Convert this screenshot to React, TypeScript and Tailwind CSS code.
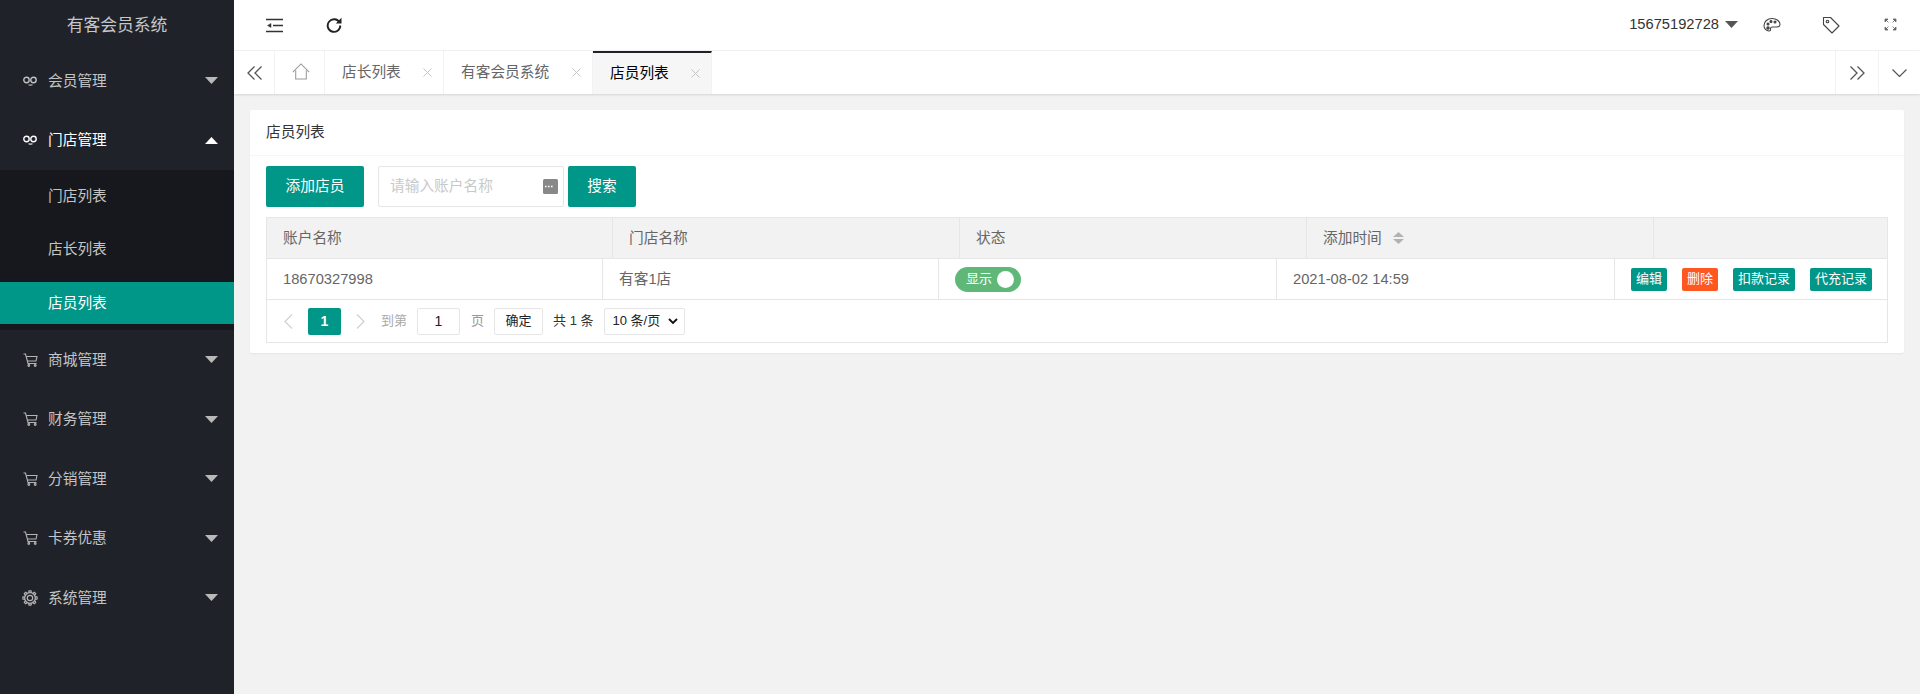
import React from "react";

const FONT = "[font-family:'Liberation_Sans','Noto_Sans_CJK_SC',sans-serif]";

function Infinity8({ active }: { active?: boolean }) {
  return (
    <svg width="14" height="10" viewBox="0 0 14 10" fill="none" stroke={active ? "#fff" : "#c2c2c2"} strokeWidth="1.400">
      <circle cx="3.500" cy="4" r="2.700" />
      <circle cx="10.500" cy="4" r="2.700" />
      <path d="M5.500 8.800c1.500.5 2.500.5 4 0" strokeWidth="1.100" />
    </svg>
  );
}

function Cart() {
  return (
    <svg width="15" height="14" viewBox="0 0 15 14" fill="none" stroke="#b4b4b4" strokeWidth="1.100">
      <path d="M0.500 1H2.500L5 10.500H13.500" />
      <path d="M3.200 3.500H14L13 8H4.400" />
      <circle cx="5.800" cy="12.500" r="0.900" />
      <circle cx="12.200" cy="12.500" r="0.900" />
    </svg>
  );
}

const GEAR_ANGLES = [0, 45, 90, 135, 180, 225, 270, 315];

function Gear() {
  return (
    <svg width="16" height="16" viewBox="0 0 16 16" fill="none" stroke="#b4b4b4" strokeWidth="1.200">
      <circle cx="8" cy="8" r="5.300" />
      <circle cx="8" cy="8" r="2.700" />
      {GEAR_ANGLES.map((a) => (
        <path key={a} d="M6.600 2.900L7 0.900H9L9.400 2.900" transform={`rotate(${a} 8 8)`} />
      ))}
    </svg>
  );
}

function Caret({ up, color = "#b9b9b9" }: { up?: boolean; color?: string }) {
  return (
    <svg width="13" height="7" viewBox="0 0 13 7" fill={color}>
      <path d={up ? "M6.500 0L13 7H0z" : "M0 0H13L6.500 7z"} />
    </svg>
  );
}

function MenuItem({ icon, label, up, active }: { icon: React.ReactNode; label: string; up?: boolean; active?: boolean }) {
  return (
    <div className={`flex items-center h-[59.500px] pl-[22px] pr-[16px] text-[14.700px] ${active ? "text-white" : "text-[#c4c4c4]"}`}>
      <span className="w-[16px] flex justify-center">{icon}</span>
      <span className="ml-[10px] flex-1">{label}</span>
      <Caret up={up} color={active ? "#ffffff" : "#b9b9b9"} />
    </div>
  );
}

function Sidebar() {
  return (
    <aside className="w-[234px] shrink-0 bg-[#20222a] min-h-[694px]">
      <div className="h-[51px] flex items-center justify-center text-[16.800px] text-[#c6c8ca]">有客会员系统</div>
      <MenuItem icon={<Infinity8 />} label="会员管理" />
      <MenuItem icon={<Infinity8 active />} label="门店管理" up active />
      <div className="h-[160px] bg-[#17181d] text-[14.700px] text-[#c4c4c4]">
        <div className="h-[53px] flex items-center pl-[48px]">门店列表</div>
        <div className="h-[53px] flex items-center pl-[48px]">店长列表</div>
        <div className="h-[42px] mt-[6px] flex items-center pl-[48px] bg-[#009688] text-white">店员列表</div>
      </div>
      <MenuItem icon={<Cart />} label="商城管理" />
      <MenuItem icon={<Cart />} label="财务管理" />
      <MenuItem icon={<Cart />} label="分销管理" />
      <MenuItem icon={<Cart />} label="卡券优惠" />
      <MenuItem icon={<Gear />} label="系统管理" />
    </aside>
  );
}

function TopBar() {
  return (
    <header className="h-[51px] border-b border-[#f2f2f2] bg-white flex items-center pl-[32px] text-[#333]">
      <svg width="17" height="15" viewBox="0 0 17 15" fill="none" stroke="#333" strokeWidth="1.600">
        <path d="M0 1.500H17M7 7.500H17M0 13.500H17" />
        <path d="M5 5.500L1.500 7.500L5 9.500z" fill="#333" strokeWidth="0.500" />
      </svg>
      <svg className="ml-[43px]" width="16" height="16" viewBox="0 0 16 16" fill="none" stroke="#222" strokeWidth="1.900">
        <path d="M13.500 5.500A6.300 6.300 0 1 0 14.300 8.500" />
        <path d="M15.500 0.800V6.500H9.800z" fill="#222" stroke="none" />
      </svg>
      <div className="ml-auto flex items-center">
        <span className="text-[14.700px] text-[#333] -translate-y-[1px]">15675192728</span>
        <span className="ml-[6px]"><Caret color="#555" /></span>
        <svg className="ml-[25px]" width="18" height="16" viewBox="0 0 18 16" fill="none" stroke="#444" strokeWidth="1.100">
          <path d="M9 1.500C4.500 1.500 1 4.500 1 8.500c0 3 2.200 5.500 5 5.500 2 0 1.500-1.500 1.500-2.500s1-1.500 2-1.500h4c2 0 3.500-.8 3.500-2.500C17 4 13.500 1.500 9 1.500z" />
          <circle cx="5" cy="7" r="1" fill="#444" />
          <circle cx="8" cy="4.500" r="1" fill="#444" />
          <circle cx="12" cy="5" r="1" fill="#444" />
          <circle cx="5" cy="11" r="1.200" fill="#444" />
        </svg>
        <svg className="ml-[41px]" width="18" height="18" viewBox="0 0 18 18" fill="none" stroke="#444" strokeWidth="1.100">
          <path d="M1.500 1.500H8.500L17 10L10 17L1.500 8.500z" strokeLinejoin="round" />
          <circle cx="5.500" cy="5.500" r="1.300" />
        </svg>
        <svg className="ml-[44px] mr-[23px]" width="13" height="13" viewBox="0 0 13 13" fill="#666" stroke="#666" strokeWidth="0.800">
          <path d="M1 1h3L1 4zM12 1H9l3 3zM1 12h3L1 9zM12 12H9l3-3z" />
          <path d="M2 2L4.500 4.500M11 2L8.500 4.500M2 11L4.500 8.500M11 11L8.500 8.500" fill="none" />
        </svg>
      </div>
    </header>
  );
}

function CloseX() {
  return (
    <svg width="9" height="9" viewBox="0 0 9 9" stroke="#c4c4c4" strokeWidth="1">
      <path d="M.5.5L8.500 8.500M8.500.5L.5 8.500" />
    </svg>
  );
}

function Tab({ label, width, active }: { label: string; width: string; active?: boolean }) {
  return (
    <div className={`flex items-center justify-between h-full pl-[17px] pr-[11px] text-[14.700px] border-r border-[#f2f2f2] ${width} ${active ? "bg-[#f6f6f6] border-t-2 border-t-[#20222a] text-black" : "text-[#666]"}`}>
      <span>{label}</span>
      <CloseX />
    </div>
  );
}

function TabBar() {
  return (
    <div className="h-[43px] bg-white flex items-center shadow-[0_1px_2px_rgba(0,0,0,0.12)] relative">
      <div className="w-[41px] h-full flex items-center justify-center border-r border-[#f2f2f2]">
        <svg width="15" height="14" viewBox="0 0 15 14" fill="none" stroke="#555" strokeWidth="1.300">
          <path d="M7.500 0.500L1 7L7.500 13.500M14.500 0.500L8 7L14.500 13.500" />
        </svg>
      </div>
      <div className="w-[50px] h-full flex items-center justify-center border-r border-[#f2f2f2] pl-[2px] pb-[3px]">
        <svg width="18" height="17" viewBox="0 0 17 16" fill="none" stroke="#999" strokeWidth="1">
          <path d="M.8 8.500L8.500.8l7.700 7.700M3.500 7v8h10V7" />
        </svg>
      </div>
      <Tab label="店长列表" width="w-[119px]" />
      <Tab label="有客会员系统" width="w-[149px]" />
      <Tab label="店员列表" width="w-[119px]" active />
      <div className="ml-auto w-[43px] h-full flex items-center justify-center border-l border-[#f2f2f2]">
        <svg width="15" height="14" viewBox="0 0 15 14" fill="none" stroke="#555" strokeWidth="1.300">
          <path d="M.5 .5L7 7L.5 13.500M7.500 .5L14 7L7.500 13.500" />
        </svg>
      </div>
      <div className="w-[42px] h-full flex items-center justify-center border-l border-[#f2f2f2]">
        <svg width="15" height="8" viewBox="0 0 15 8" fill="none" stroke="#555" strokeWidth="1.200">
          <path d="M.5 .5L7.500 7.500L14.500 .5" />
        </svg>
      </div>
    </div>
  );
}

const COLS_HEAD = ["w-[346px]", "w-[347px]", "w-[347px]", "w-[347px]", "flex-1"];
const COLS_BODY = ["w-[336px]", "w-[336px]", "w-[338px]", "w-[338px]", "flex-1"];

function HeadCell({ idx, children }: { idx: number; children?: React.ReactNode }) {
  return (
    <div className={`${COLS_HEAD[idx]} h-full flex items-center pl-[16px] ${idx < 4 ? "border-r border-[#e6e6e6]" : ""}`}>
      {children}
    </div>
  );
}

function BodyCell({ idx, children }: { idx: number; children?: React.ReactNode }) {
  return (
    <div className={`${COLS_BODY[idx]} h-full flex items-center pl-[16px] ${idx < 4 ? "border-r border-[#e6e6e6]" : ""}`}>
      {children}
    </div>
  );
}

function MiniBtn({ label, orange }: { label: string; orange?: boolean }) {
  return (
    <span className={`h-[23px] px-[5px] rounded-[2px] flex items-center text-[13px] text-white ${orange ? "bg-[#ff5722]" : "bg-[#009688]"}`}>
      {label}
    </span>
  );
}

function Table() {
  return (
    <div className="mt-[10px] border border-[#e6e6e6] text-[14.700px] text-[#666]">
      <div className="h-[41px] flex bg-[#f2f2f2] border-b border-[#e6e6e6]">
        <HeadCell idx={0}>账户名称</HeadCell>
        <HeadCell idx={1}>门店名称</HeadCell>
        <HeadCell idx={2}>状态</HeadCell>
        <HeadCell idx={3}>
          <span>添加时间</span>
          <svg className="ml-[11px]" width="11" height="12" viewBox="0 0 11 12" fill="#b2b2b2">
            <path d="M5.500 0L11 5H0zM0 7H11L5.500 12z" />
          </svg>
        </HeadCell>
        <HeadCell idx={4} />
      </div>
      <div className="h-[41px] flex border-b border-[#e6e6e6]">
        <BodyCell idx={0}>18670327998</BodyCell>
        <BodyCell idx={1}>有客1店</BodyCell>
        <BodyCell idx={2}>
          <span className="w-[66px] h-[25px] rounded-full bg-[#5fb878] flex items-center pl-[11px] pr-[7px] justify-between text-white text-[13px]">
            <span>显示</span>
            <span className="w-[17px] h-[17px] rounded-full bg-white" />
          </span>
        </BodyCell>
        <BodyCell idx={3}>2021-08-02 14:59</BodyCell>
        <BodyCell idx={4}>
          <span className="flex gap-[15px]">
            <MiniBtn label="编辑" />
            <MiniBtn label="删除" orange />
            <MiniBtn label="扣款记录" />
            <MiniBtn label="代充记录" />
          </span>
        </BodyCell>
      </div>
      <Pager />
    </div>
  );
}

function Pager() {
  return (
    <div className="h-[42px] flex items-center pl-[17px] text-[13px]">
      <svg width="9" height="15" viewBox="0 0 9 15" fill="none" stroke="#d2d2d2" strokeWidth="1.300">
        <path d="M8 .5L1 7.500L8 14.500" />
      </svg>
      <span className="ml-[15px] w-[33px] h-[27px] rounded-[2px] bg-[#009688] text-white flex items-center justify-center text-[14px] font-bold">1</span>
      <svg className="ml-[15px]" width="9" height="15" viewBox="0 0 9 15" fill="none" stroke="#d2d2d2" strokeWidth="1.300">
        <path d="M1 .5L8 7.500L1 14.500" />
      </svg>
      <span className="ml-[16px] text-[#aaa]">到第</span>
      <span className="ml-[10px] w-[43px] h-[27px] border border-[#e6e6e6] rounded-[2px] text-[#222] flex items-center justify-center text-[14px]">1</span>
      <span className="ml-[11px] text-[#999]">页</span>
      <span className="ml-[10px] w-[49px] h-[27px] border border-[#e6e6e6] rounded-[2px] text-[#222] flex items-center justify-center">确定</span>
      <span className="ml-[10px] text-[#333]">共 1 条</span>
      <span className="ml-[10px] w-[81px] h-[27px] border border-[#e6e6e6] rounded-[2px] text-[#222] flex items-center justify-between pl-[8px] pr-[6px]">
        <span>10 条/页</span>
        <svg width="10" height="7" viewBox="0 0 10 7" fill="none" stroke="#111" strokeWidth="1.800">
          <path d="M1 1L5 5L9 1" />
        </svg>
      </span>
    </div>
  );
}

function Card() {
  return (
    <section className="bg-white rounded-[2px] shadow-[0_1px_2px_rgba(0,0,0,0.05)]">
      <div className="h-[46px] flex items-center px-[16px] text-[14.700px] text-[#333] border-b border-[#f6f6f6]">店员列表</div>
      <div className="px-[16px] pt-[10px] pb-[10px]">
        <div className="flex items-center">
          <span className="w-[98px] h-[41px] rounded-[2px] bg-[#009688] text-white text-[14.700px] flex items-center justify-center">添加店员</span>
          <span className="ml-[14px] w-[186px] h-[41px] border border-[#e6e6e6] rounded-[2px] flex items-center justify-between pl-[11px] pr-[5px] text-[14.700px] text-[#c9c9c9]">
            <span>请输入账户名称</span>
            <svg width="15" height="15" viewBox="0 0 15 15">
              <rect width="15" height="15" rx="1.500" fill="#888" />
              <path d="M2 7.500h1.600M5 7.500h1.600M8 7.500h1.600" stroke="#fff" strokeWidth="1.400" />
            </svg>
          </span>
          <span className="ml-[4px] w-[68px] h-[41px] rounded-[2px] bg-[#009688] text-white text-[14.700px] flex items-center justify-center">搜索</span>
        </div>
        <Table />
      </div>
    </section>
  );
}

export default function App() {
  return (
    <div className={`flex h-[694px] overflow-hidden bg-[#f2f2f2] ${FONT}`}>
      <Sidebar />
      <main className="flex-1 min-w-0">
        <TopBar />
        <TabBar />
        <div className="px-[16px] pt-[16px]">
          <Card />
        </div>
      </main>
    </div>
  );
}
